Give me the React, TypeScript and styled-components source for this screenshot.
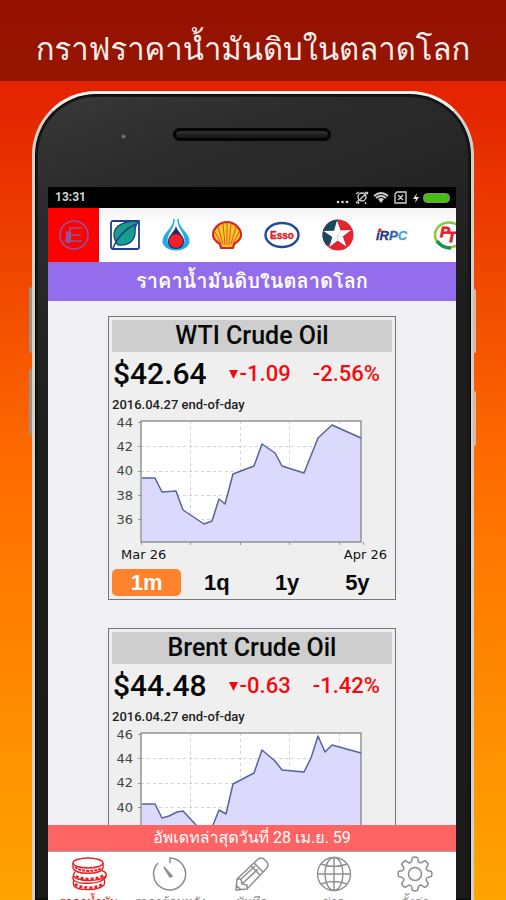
import React from 'react';
import styled, { createGlobalStyle } from 'styled-components';

const thai = "'Loma', 'Noto Sans Thai', Roboto, sans-serif";

const GlobalStyle = createGlobalStyle`
  *, *::before, *::after { box-sizing: border-box; }
  body { margin: 0; font-family: Roboto, sans-serif; }
  h1, h2, h3, p { margin: 0; }
  button { border: 0; padding: 0; background: none; font: inherit; color: inherit; cursor: pointer; }
  svg { display: block; }
`;

const Page = styled.div`
  height: 100vh;
  display: flex;
  flex-direction: column;
  overflow: hidden;
  background: linear-gradient(#e21a00 0%, #e42600 12%, #f04a00 32%, #ff6c00 52%, #ff8200 70%, #ffa400 100%);
`;

const Banner = styled.header`
  flex: none;
  height: 81px;
  padding-top: 17px;
  display: flex;
  align-items: center;
  justify-content: center;
  background: rgba(0, 0, 0, 0.34);
`;

const BannerTitle = styled.h1`
  font: 400 31px/60px ${thai};
  color: #fdeeee;
  white-space: nowrap;
`;

const Phone = styled.main`
  position: relative;
  flex: 1;
  min-height: 0;
  margin: 10px 32px 0;
  padding: 0 15px 0 13px;
  display: flex;
  flex-direction: column;
  border: 3px solid #d4d0cc;
  border-top-color: #f6f0ee;
  border-bottom: 0;
  border-radius: 64px 64px 0 0;
  background: linear-gradient(160deg, #3a3a3a 0, #2c2c2c 100px, #1d1d1d 340px, #1a1a1a 100%);
  box-shadow: inset 0 0 0 1px #080808, inset 0 0 0 3px #161818;
`;

const SideKey = styled.span<{ $side: 'left' | 'right'; $top: number; $length: number }>`
  position: absolute;
  ${(p) => p.$side}: ${(p) => (p.$side === 'left' ? '-6px' : '-5px')};
  top: ${(p) => p.$top}px;
  width: 3px;
  height: ${(p) => p.$length}px;
  border-radius: 2px;
  background: ${(p) => (p.$side === 'left' ? '#a08f86' : '#d9b9a8')};
`;

const PhoneTop = styled.div`
  flex: none;
  height: 93px;
  display: flex;
  justify-content: center;
  padding-top: 34px;
`;

const Sensor = styled.span`
  position: absolute;
  left: 86px;
  top: 40px;
  width: 5px;
  height: 5px;
  border-radius: 50%;
  background: radial-gradient(#7c7c7c 20%, #2b2b2b 80%);
`;

const Speaker = styled.div`
  width: 158px;
  height: 13px;
  border: 3px solid #050505;
  border-radius: 7px;
  background: linear-gradient(#303030, #151515);
`;

const Screen = styled.div`
  flex: 1;
  min-height: 0;
  display: flex;
  flex-direction: column;
  overflow: hidden;
  background: #f0eff4;
`;

const StatusBar = styled.div`
  flex: none;
  height: 21px;
  padding: 0 5px 0 7px;
  display: flex;
  align-items: center;
  justify-content: space-between;
  background: #000;
  color: #d4d4d4;
  font: 700 12px/21px Roboto, sans-serif;
`;

const BrandBar = styled.nav`
  flex: none;
  height: 54px;
  display: flex;
  overflow: hidden;
  background: linear-gradient(#f3f3f3, #fff 16px);
`;

const Brand = styled.button<{ $wide?: boolean; $active?: boolean }>`
  flex: none;
  width: ${(p) => (p.$wide ? 60 : 51)}px;
  display: flex;
  align-items: center;
  justify-content: center;
  background: ${(p) => (p.$active ? '#fe0000' : 'transparent')};
`;

const ScreenTitle = styled.h2`
  flex: none;
  height: 39px;
  background: #936deb;
  color: #fff;
  font: 700 20px/39px ${thai};
  text-align: center;
  white-space: nowrap;
`;

const Feed = styled.div`
  flex: 1;
  min-height: 0;
  padding: 15px 60px 0;
  display: flex;
  flex-direction: column;
  gap: 28px;
  overflow: hidden;
`;

const Card = styled.section`
  flex: none;
  padding: 3px;
  border: 1px solid #777;
  background: #efefef;
`;

const CardTitle = styled.h3`
  height: 32px;
  background: #cecece;
  font: 500 25px/32px Roboto, sans-serif;
  text-align: center;
  color: #080808;
`;

const Quote = styled.div`
  height: 44px;
  padding: 0 12px 0 1px;
  display: flex;
  align-items: center;
  justify-content: space-between;
  color: #f8090d;
  font: 500 22px/44px Roboto, sans-serif;
`;

const Price = styled.strong`
  font-size: 30px;
  font-weight: 500;
  color: #050505;
`;

const Change = styled.span`
  display: flex;
  align-items: center;
  gap: 2px;
`;

const Stamp = styled.p`
  font: 500 13px/17px Roboto, sans-serif;
  color: #222;
`;

const Chart = styled.svg`
  width: 100%;
  height: auto;
  font: 13px 'DejaVu Sans', sans-serif;
`;

const Ranges = styled.div`
  display: grid;
  grid-template-columns: repeat(4, 1fr);
  gap: 1px;
`;

const Range = styled.button<{ $active?: boolean }>`
  height: 27px;
  border-radius: 5px;
  background: ${(p) => (p.$active ? '#ff822d' : 'transparent')};
  color: ${(p) => (p.$active ? '#fff' : '#080808')};
  font: 700 22px/27px 'Liberation Sans', sans-serif;
`;

const UpdateBar = styled.p`
  flex: none;
  height: 26px;
  background: #ff6464;
  color: #fff;
  font: 400 16px/26px Roboto, ${thai};
  text-align: center;
`;

const Tabs = styled.nav`
  flex: none;
  height: 49px;
  display: grid;
  grid-template-columns: repeat(5, 1fr);
  overflow: hidden;
  border-top: 1px solid #a9a9a9;
  background: #fff;
`;

const Tab = styled.button<{ $active?: boolean }>`
  height: 62px;
  padding-top: 4px;
  display: flex;
  flex-direction: column;
  align-items: center;
  color: ${(p) => (p.$active ? '#ee1c1c' : '#8e8e8e')};
  font: 400 12px/20px ${thai};
  white-space: nowrap;
`;

type Series = { name: string; price: string; change: string; percent: string; top: number; points: [number, number][] };

const series: Series[] = [
  {
    name: 'WTI Crude Oil', price: '$42.64', change: '-1.09', percent: '-2.56%', top: 44,
    points: [[30, 65], [43, 65], [50, 79], [64, 78], [71, 97], [92, 111], [100, 108], [107, 86], [113, 91], [121, 61], [142, 53], [150, 31], [163, 40], [170, 53], [192, 60], [206, 25], [220, 12], [249, 25]],
  },
  {
    name: 'Brent Crude Oil', price: '$44.48', change: '-0.63', percent: '-1.42%', top: 46,
    points: [[30, 79], [43, 79], [50, 93], [57, 91], [65, 87], [71, 86], [84, 100], [94, 112], [101, 100], [107, 85], [114, 89], [121, 59], [142, 48], [150, 25], [163, 36], [170, 45], [192, 47], [199, 33], [206, 11], [213, 27], [220, 20], [249, 28]],
  },
];

function PriceChart({ item }: { item: Series }) {
  const line = item.points.map((p) => p.join(',')).join(' ');
  return (
    <Chart viewBox="0 0 280 156" role="img" aria-label={`${item.name} 1m`}>
      <rect x="29" y="8" width="220" height="121" fill="#fff" />
      <g stroke="#d2d2d2" strokeDasharray="3 3">
        {[33, 58, 82, 106].map((y) => <path key={y} d={`M29 ${y}.5H249`} />)}
        {[78, 128, 177, 227].map((x) => <path key={x} d={`M${x}.5 8V129`} />)}
      </g>
      <polygon points={`30,129 ${line} 249,129`} fill="#dbdafc" />
      <g stroke="#999">
        {[9, 33, 58, 82, 106].map((y) => <path key={y} d={`M26 ${y}.5h3`} />)}
        {[29, 78, 128, 177, 227, 251].map((x) => <path key={x} d={`M${x}.5 129v3`} />)}
      </g>
      <rect x="29" y="8" width="220" height="121" fill="none" stroke="#858585" strokeWidth="1.3" />
      <polyline points={line} fill="none" stroke="#5563a0" strokeWidth="1.5" strokeLinejoin="round" />
      <g fill="#444" textAnchor="end">
        {[14, 38, 62, 87, 111].map((y, i) => <text key={y} x="21" y={y}>{item.top - i * 2}</text>)}
      </g>
      <g fill="#111">
        <text x="9" y="146">Mar 26</text>
        <text x="275" y="146" textAnchor="end">Apr 26</text>
      </g>
    </Chart>
  );
}

const EnergyLogo = () => (
  <svg width="32" height="32" viewBox="0 0 32 32" fill="none" stroke="#8d559b" strokeWidth="1.6">
    <circle cx="16" cy="16" r="14" />
    <path d="M13 9h11M13 16h10M13 22h11M12 8v15M8 23h5M9 13h3v9H8z" />
    <path d="M9 13h4v9H8z" fill="#8d559b" stroke="none" />
  </svg>
);

const BangchakLogo = () => (
  <svg width="30" height="30" viewBox="0 0 30 30">
    <rect x="1" y="1" width="28" height="28" rx="2" fill="#fff" stroke="#1f3f8c" strokeWidth="1.8" />
    <path d="M29 1C14 1 5 5 4 14c0 5 1 8 4 11 9 1 16-3 17-11 0-5 0-9 4-13z" fill="#14a08c" stroke="#1f3f8c" strokeWidth="1.3" />
    <path d="M3 28C7 18 13 10 26 4" fill="none" stroke="#1f3f8c" strokeWidth="1.6" />
  </svg>
);

const PttLogo = () => (
  <svg width="28" height="32" viewBox="0 0 28 32">
    <path d="M12 0C12 9 1 14 1 22c0 5 5 9 13 9s13-4 13-9C27 14 16 9 16 0c-1 8 7 14 7 21 0 4-4 7-9 7s-9-3-9-7C5 14 13 8 12 0z" fill="#20a9e8" stroke="#20a9e8" />
    <path d="M14 6c0 6-8 10-8 16 0 5 3 8 8 8s8-3 8-8c0-6-8-10-8-16z" fill="#1f2a6e" />
    <circle cx="14" cy="22" r="7" fill="#f2202b" />
  </svg>
);

const ShellLogo = () => (
  <svg width="32" height="30" viewBox="0 0 32 30">
    <path d="M16 2C9 2 2 8 2 15c0 4 2 6 7 9l1 4h12l1-4c5-3 7-5 7-9C30 8 23 2 16 2z" fill="#fcc91e" stroke="#d8232a" strokeWidth="2.2" strokeLinejoin="round" />
    <path d="M14 25L12 4M18 25l2-21M16 25V3M12 24L7 7M20 24l5-17M10 23L4 12M22 23l6-11" stroke="#d8433a" fill="none" strokeWidth="0.9" />
  </svg>
);

const EssoLogo = () => (
  <svg width="36" height="28" viewBox="0 0 36 28">
    <ellipse cx="18" cy="14" rx="16.5" ry="12" fill="#fff" stroke="#1f4a9e" strokeWidth="2.4" />
    <text x="18" y="18" textAnchor="middle" fontFamily="Liberation Sans, sans-serif" fontSize="10" fontWeight="700" fill="#e3202a" stroke="#e3202a" strokeWidth="0.4">Esso</text>
  </svg>
);

const starPoints = Array.from({ length: 10 }, (_, i) => {
  const angle = ((i * 36 - 92) * Math.PI) / 180;
  const radius = i % 2 ? 5.5 : 14.5;
  return `${(15.5 + radius * Math.cos(angle)).toFixed(1)},${(16 + radius * Math.sin(angle)).toFixed(1)}`;
}).join(' ');

const CaltexLogo = () => (
  <svg width="32" height="32" viewBox="0 0 32 32">
    <circle cx="16" cy="16" r="15.5" fill="#e22531" />
    <path d="M16 .5A15.500 15.500 0 0 0 5 27L16 16z" fill="#19495a" />
    <polygon points={starPoints} fill="#fff" />
    <path d="M15.500 16l3.500-4M15.500 16l5 2M15.500 16v5" stroke="#c9d3d8" strokeWidth="0.8" />
  </svg>
);

const IrpcLogo = () => (
  <svg width="38" height="16" viewBox="0 0 38 16">
    <text x="2" y="13" fontFamily="Liberation Sans, sans-serif" fontSize="13" fontWeight="700" fontStyle="italic" fill="#24357c" stroke="#24357c" strokeWidth="0.3">
      iR<tspan fill="#2f62b0" stroke="#2f62b0">P</tspan><tspan fill="#3fa6e0" stroke="#3fa6e0">C</tspan>
    </text>
    <circle cx="6" cy="3" r="1.700" fill="#e52630" />
  </svg>
);

const PtLogo = () => (
  <svg width="32" height="30" viewBox="0 0 32 30">
    <ellipse cx="16" cy="15" rx="14" ry="12.500" fill="#fff" stroke="#8cc63f" strokeWidth="2.500" />
    <path d="M4 21q5 7 14 7" stroke="#16954a" strokeWidth="3.500" fill="none" />
    <g fontFamily="Liberation Sans, sans-serif" fontSize="15" fontWeight="700" fontStyle="italic" fill="#e5202b" stroke="#e5202b" strokeWidth="0.8">
      <text x="7" y="17">P</text>
      <text x="14" y="22">T</text>
    </g>
  </svg>
);

const StatusIcons = () => (
  <svg width="116" height="18" viewBox="0 0 116 18" fill="none" stroke="#cfcfcf" strokeWidth="1.400">
    <g fill="#d8d8d8" stroke="none">
      <circle cx="3" cy="13" r="1.300" /><circle cx="7.500" cy="13" r="1.300" /><circle cx="12" cy="13" r="1.300" />
    </g>
    <circle cx="27" cy="8" r="4" />
    <path d="M21 5l3-2M30 3l3 2M24 13l-1 2M30 13l1 2M21 14L33 3" />
    <path d="M39 7q7-6 14 0M41 9q5-4 10 0" strokeWidth="2" />
    <path d="M43 10q3-2 6 0l-3 4z" fill="#cfcfcf" stroke="none" />
    <path d="M60 5l2-2h9v11H60zM63 6l5 5M68 6l-5 5" />
    <path d="M82 4l-4 6h3l-1 4 4-6h-3z" fill="#e6e6e6" stroke="none" />
    <rect x="88.500" y="4.500" width="26" height="9" rx="4" fill="#45bf12" stroke="#8b8b8b" strokeWidth="1" />
  </svg>
);

const CoinsIcon = () => (
  <svg width="36" height="36" viewBox="0 0 36 34" fill="none" stroke="currentColor" strokeWidth="1.400">
    <ellipse cx="17" cy="6" rx="15" ry="5" />
    <path d="M2 6v5c2 7 28 7 30 0V6" />
    <path d="M4 10c5 5 22 5 26 1" strokeDasharray="3 1" strokeWidth="2" />
    <path d="M4 15c-3 3-1 6 3 7 10 3 25 1 28-3 1-2-1-5-4-5M2 19v3c3 6 28 6 33-2v-2" />
    <path d="M5 19c8 5 23 3 28-1" strokeDasharray="3 2" strokeWidth="2.500" />
    <path d="M3 23c-1 2-1 4 0 6 5 5 24 5 30-1 1-2 1-4 0-6" />
    <path d="M4 27c6 5 24 5 28-1" strokeDasharray="3 2" strokeWidth="2.500" />
  </svg>
);

const ClockIcon = () => (
  <svg width="36" height="36" viewBox="0 0 36 36" fill="none" stroke="currentColor" strokeWidth="1.500">
    <path d="M18 7V2a16 16 0 1 1-12 5" />
    <path d="M12 11l8 9-2 1z" fill="currentColor" />
  </svg>
);

const PencilIcon = () => (
  <svg width="36" height="36" viewBox="0 0 36 36" fill="none" stroke="currentColor" strokeWidth="1.500" strokeLinejoin="round">
    <path d="M2 34l1-11L23 4q4-4 8 0l1 1q4 4 0 8L13 33zM20 7l9 9M17 10l9 9M3 23l4 0 1 5 5 1v4M7 23L21 10M8 28L24 13M2 29l5 5" />
  </svg>
);

const GlobeIcon = () => (
  <svg width="36" height="36" viewBox="0 0 36 36" fill="none" stroke="currentColor" strokeWidth="1.400">
    <circle cx="18" cy="18" r="16.500" />
    <ellipse cx="18" cy="18" rx="9" ry="16.500" />
    <path d="M18 1v34M1 18h34M5 8q13 5 26 0M5 28q13-5 26 0" />
  </svg>
);

const teeth = Array.from({ length: 8 }, (_, i) => {
  const at = (r: number, d: number) => {
    const a = ((i * 45 + d - 90) * Math.PI) / 180;
    return `${(18 + r * Math.cos(a)).toFixed(1)} ${(18 + r * Math.sin(a)).toFixed(1)}`;
  };
  return `${i ? 'L' : 'M'}${at(16.5, -9)} Q${at(17.5, 0)} ${at(16.5, 9)} L${at(13, 15)} Q${at(11.5, 22)} ${at(13, 30)}`;
}).join(' ');

const GearIcon = () => (
  <svg width="36" height="36" viewBox="0 0 36 36" fill="none" stroke="currentColor" strokeWidth="1.500" strokeLinejoin="round">
    <path d={`${teeth}Z`} />
    <circle cx="18" cy="18" r="6.500" />
  </svg>
);

const brands = [
  { name: 'EPPO', icon: <EnergyLogo />, active: true },
  { name: 'Bangchak', icon: <BangchakLogo /> },
  { name: 'PTT', icon: <PttLogo /> },
  { name: 'Shell', icon: <ShellLogo /> },
  { name: 'Esso', icon: <EssoLogo />, wide: true },
  { name: 'Caltex', icon: <CaltexLogo /> },
  { name: 'IRPC', icon: <IrpcLogo />, wide: true },
  { name: 'PT', icon: <PtLogo /> },
];

const tabs = [
  { label: 'ราคาน้ำมัน', icon: <CoinsIcon />, active: true },
  { label: 'ราคาย้อนหลัง', icon: <ClockIcon /> },
  { label: 'บันทึก', icon: <PencilIcon /> },
  { label: 'ข่าว', icon: <GlobeIcon /> },
  { label: 'ตั้งค่า', icon: <GearIcon /> },
];

export default function App() {
  return (
    <Page>
      <GlobalStyle />
      <Banner><BannerTitle>กราฟราคาน้ำมันดิบในตลาดโลก</BannerTitle></Banner>
      <Phone>
        <SideKey $side="left" $top={193} $length={66} />
        <SideKey $side="left" $top={275} $length={66} />
        <SideKey $side="right" $top={195} $length={64} />
        <SideKey $side="right" $top={297} $length={55} />
        <Sensor />
        <PhoneTop><Speaker /></PhoneTop>
        <Screen>
          <StatusBar><span>13:31</span><StatusIcons /></StatusBar>
          <BrandBar>
            {brands.map((b) => (
              <Brand key={b.name} aria-label={b.name} $wide={b.wide} $active={b.active}>{b.icon}</Brand>
            ))}
          </BrandBar>
          <ScreenTitle>ราคาน้ำมันดิบในตลาดโลก</ScreenTitle>
          <Feed>
            {series.map((item) => (
              <Card key={item.name}>
                <CardTitle>{item.name}</CardTitle>
                <Quote>
                  <Price>{item.price}</Price>
                  <Change>
                    <svg width="9" height="9" viewBox="0 0 9 9"><path d="M0 0h9L4.500 9z" fill="currentColor" /></svg>
                    {item.change}
                  </Change>
                  <span>{item.percent}</span>
                </Quote>
                <Stamp>2016.04.27 end-of-day</Stamp>
                <PriceChart item={item} />
                <Ranges>
                  {['1m', '1q', '1y', '5y'].map((r) => <Range key={r} $active={r === '1m'}>{r}</Range>)}
                </Ranges>
              </Card>
            ))}
          </Feed>
          <UpdateBar>อัพเดทล่าสุดวันที่ 28 เม.ย. 59</UpdateBar>
          <Tabs>
            {tabs.map((t) => <Tab key={t.label} $active={t.active}>{t.icon}{t.label}</Tab>)}
          </Tabs>
        </Screen>
      </Phone>
    </Page>
  );
}
